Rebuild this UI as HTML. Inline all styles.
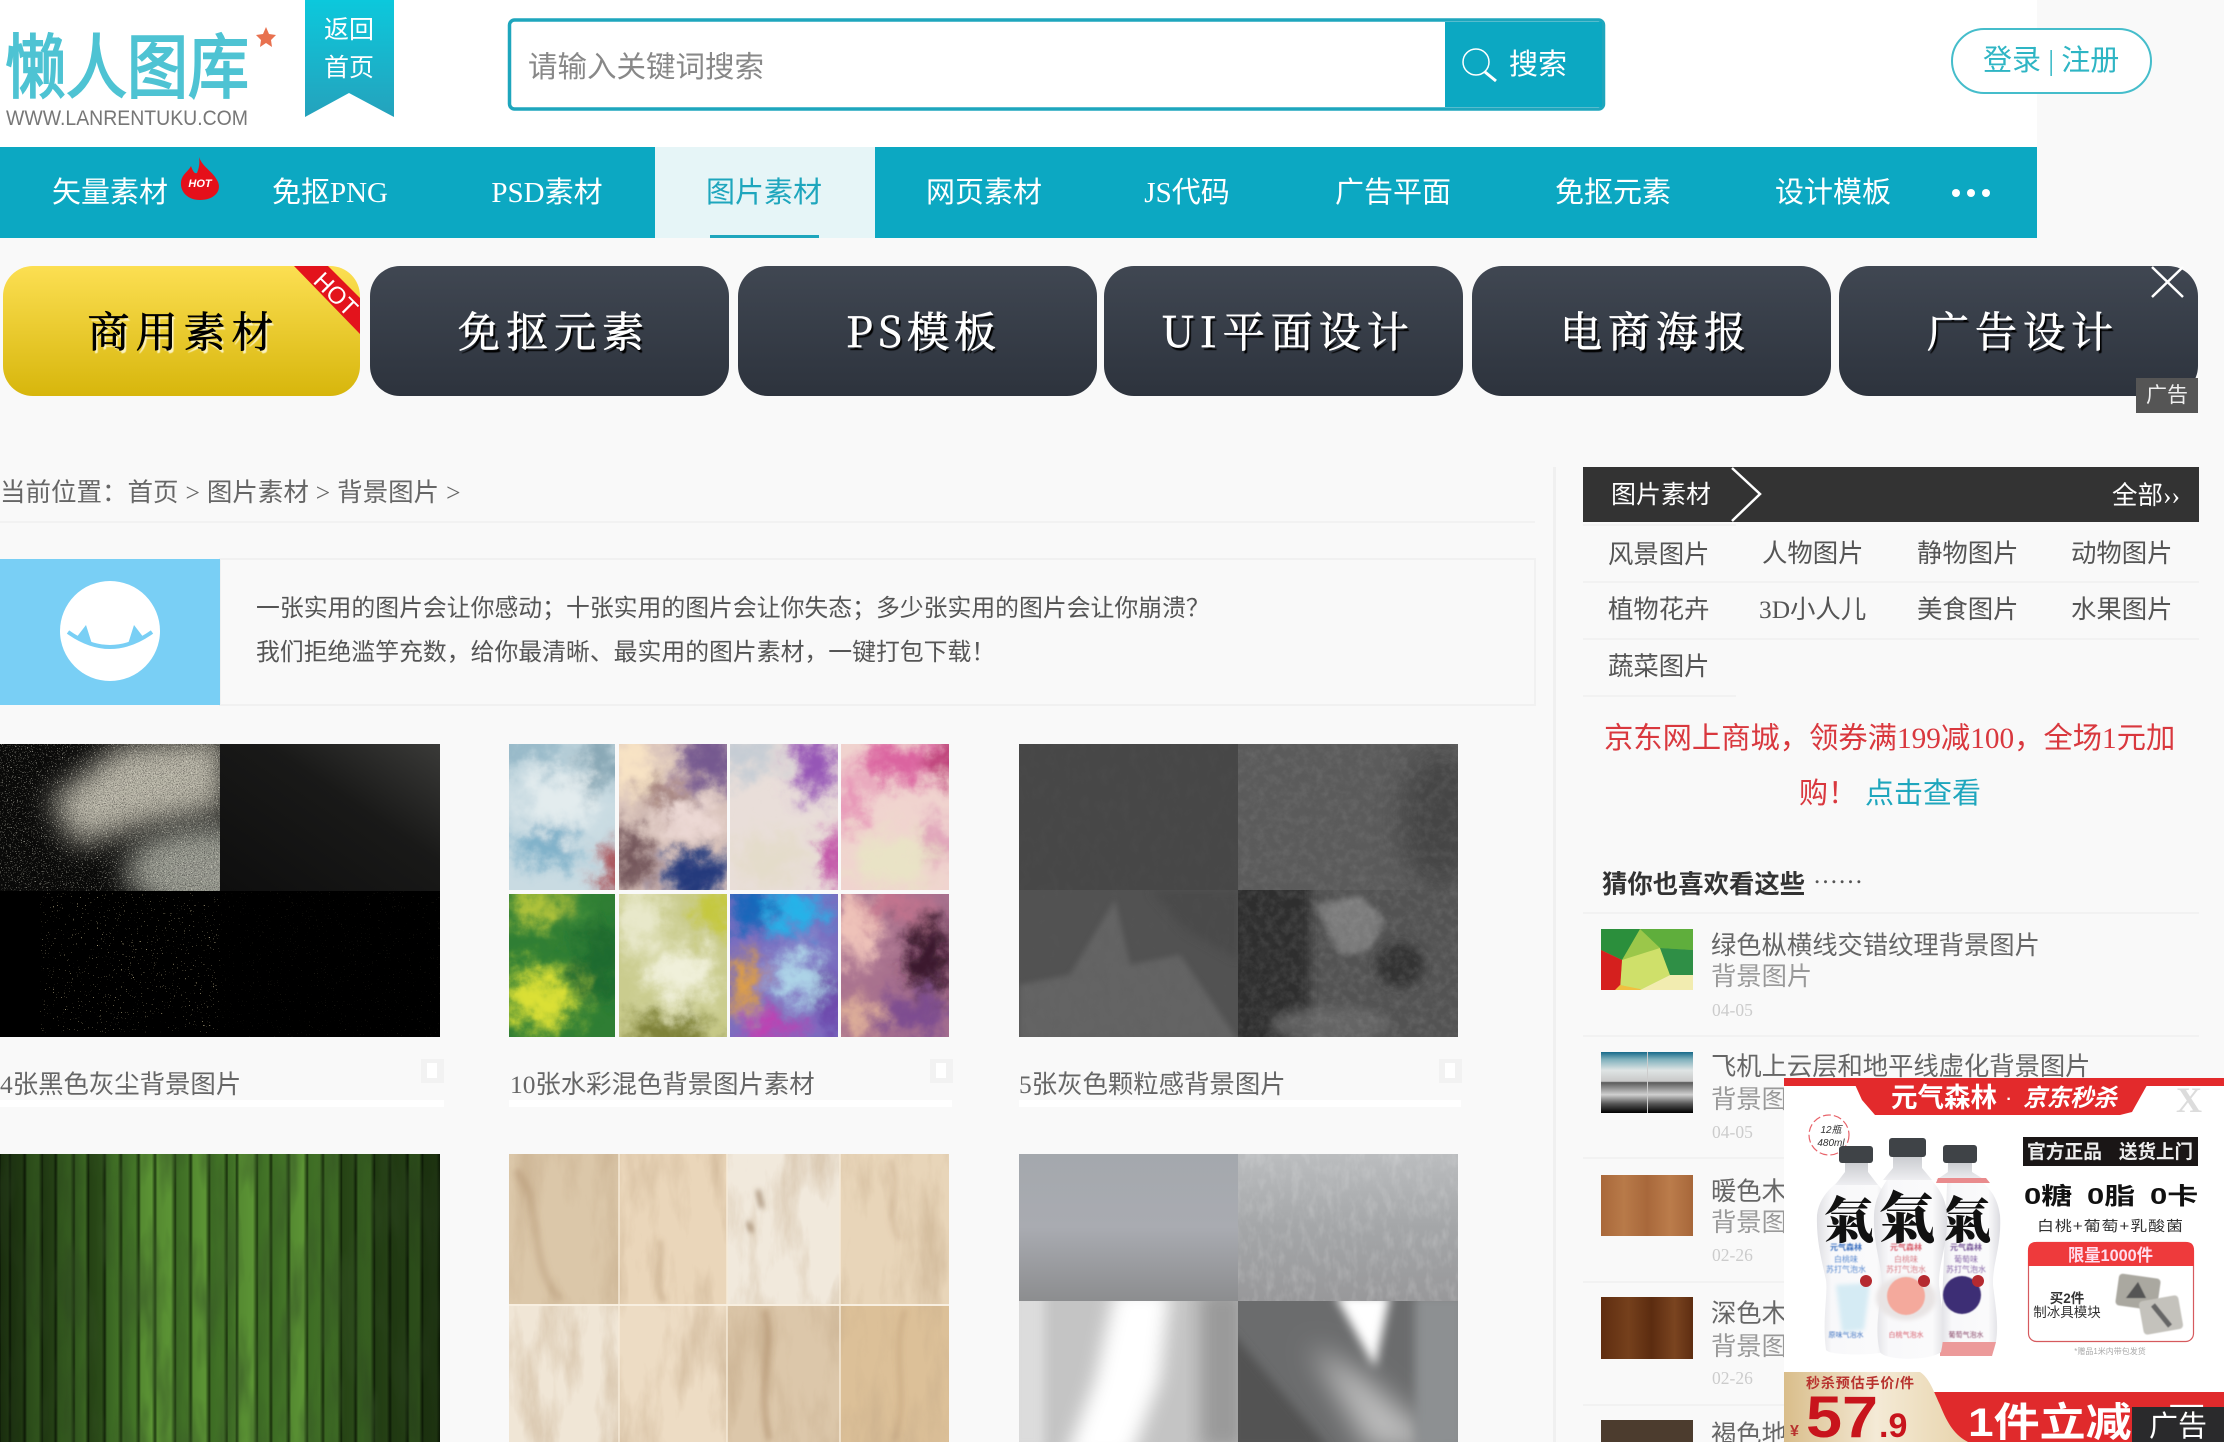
<!DOCTYPE html>
<html lang="zh-CN"><head><meta charset="utf-8"><title>图片素材</title>
<style>
html{margin:0;padding:0;width:2224px;height:1442px;overflow:hidden}
body{margin:0;padding:0;width:2224px;height:1442px;position:relative;overflow:hidden;background:#f9f9f9;font-family:"Liberation Serif","Noto Sans CJK SC",sans-serif;color:#666}
.a{position:absolute}
.t{position:absolute;white-space:nowrap}
#art{position:absolute;left:0;top:0}
.n{position:absolute;top:147px;width:220px;height:91px;line-height:92px;text-align:center;font-size:29px;color:#fff}
.b{position:absolute;top:266px;height:130px;border-radius:30px;background:linear-gradient(#404752,#2d333d);color:#fff;text-align:center;line-height:128px;font-family:"Noto Serif CJK SC","Liberation Serif",serif;font-size:42px;letter-spacing:6px;text-indent:9px;-webkit-text-stroke:.7px currentColor;text-shadow:2px 3px 1px #000}
.c{position:absolute;font-size:25.4px;line-height:30px;color:#555;white-space:nowrap}
.l{position:absolute;height:2px;background:#f2f2f2}
.h{font-size:25.3px;color:#666;line-height:30px}
.s{font-size:25.3px;color:#999;line-height:30px}
.d{font-size:17.5px;color:#ccc;line-height:20px}
.ti{font-size:25.4px;color:#666;line-height:30px}
.ub{position:absolute;top:1100px;height:7px;background:#fff}
.bk{position:absolute;top:1059px;width:23px;height:24px;background:#f2f2f2}
.bk i{position:absolute;left:6px;top:4px;width:10px;height:15px;background:#fff;display:block}
#pop{position:absolute;left:1784px;top:1078px;width:440px;height:364px;background:#fff;overflow:hidden;z-index:10}
#pop svg{position:absolute;left:0;top:0}
#pop text{font-family:"Liberation Sans","Noto Sans CJK SC",sans-serif}
</style></head><body>

<svg id="art" width="2224" height="1442" viewBox="0 0 2224 1442" xmlns="http://www.w3.org/2000/svg">
<defs>
<linearGradient id="rib" x1="0" y1="0" x2="0" y2="1"><stop offset="0" stop-color="#0cc8dc"/><stop offset="1" stop-color="#25a2bc"/></linearGradient>
<linearGradient id="g1tr" x1="1" y1="0" x2="0" y2="1"><stop offset="0" stop-color="#3a3a38"/><stop offset=".4" stop-color="#191918"/><stop offset="1" stop-color="#0e0e0e"/></linearGradient>
<linearGradient id="sd" x1="0" y1="0" x2="1" y2="0"><stop offset="0" stop-color="#000" stop-opacity=".4"/><stop offset=".3" stop-color="#000" stop-opacity="0"/><stop offset=".7" stop-color="#000" stop-opacity="0"/><stop offset="1" stop-color="#000" stop-opacity=".4"/></linearGradient>
<filter id="spk" x="0" y="0" width="100%" height="100%"><feTurbulence type="fractalNoise" baseFrequency=".8" numOctaves="2" seed="4"/><feColorMatrix values="0 0 0 0 .9 0 0 0 0 .88 0 0 0 0 .75 0 0 0 14 -9"/></filter>
<filter id="spkd" x="0" y="0" width="100%" height="100%"><feTurbulence type="fractalNoise" baseFrequency=".9" numOctaves="2" seed="14"/><feColorMatrix values="0 0 0 0 0 0 0 0 0 0 0 0 0 0 0 0 0 0 12 -6.4"/></filter>
<filter id="spk2" x="0" y="0" width="100%" height="100%"><feTurbulence type="fractalNoise" baseFrequency=".75" numOctaves="2" seed="9"/><feColorMatrix values="0 0 0 0 .8 0 0 0 0 .68 0 0 0 0 .38 0 0 0 20 -15"/></filter>
<filter id="gr" x="0" y="0" width="100%" height="100%"><feTurbulence type="fractalNoise" baseFrequency=".12" numOctaves="4" seed="7"/><feColorMatrix values="0 0 0 0 .62 0 0 0 0 .62 0 0 0 0 .62 1.8 0 0 0 -.7"/></filter>
<filter id="gr2" x="0" y="0" width="100%" height="100%"><feTurbulence type="fractalNoise" baseFrequency=".1 .06" numOctaves="4" seed="21"/><feColorMatrix values="0 0 0 0 .1 0 0 0 0 .1 0 0 0 0 .1 2 0 0 0 -.85"/></filter>
<filter id="wc" x="-30%" y="-30%" width="160%" height="160%"><feGaussianBlur stdDeviation="10" result="b"/><feTurbulence type="fractalNoise" baseFrequency=".05" numOctaves="5" seed="5" result="n"/><feDisplacementMap in="b" in2="n" scale="40" xChannelSelector="R" yChannelSelector="G"/></filter>
<filter id="mb" x="0" y="0" width="100%" height="100%"><feTurbulence type="fractalNoise" baseFrequency=".035 .01" numOctaves="5" seed="12"/><feColorMatrix values="0 0 0 0 .55 0 0 0 0 .4 0 0 0 0 .25 2.6 0 0 0 -1.15"/></filter>
<filter id="ms" x="0" y="0" width="100%" height="100%"><feTurbulence type="fractalNoise" baseFrequency=".12 .06" numOctaves="3" seed="3"/><feColorMatrix values="0 0 0 0 1 0 0 0 0 1 0 0 0 0 1 1.6 0 0 0 -.7"/></filter>
<filter id="bn" x="0" y="0" width="100%" height="100%"><feTurbulence type="fractalNoise" baseFrequency=".05 .012" numOctaves="3" seed="31"/><feColorMatrix values="0 0 0 0 .04 0 0 0 0 .1 0 0 0 0 .02 2.4 0 0 0 -.95"/></filter>
<filter id="bl" x="-40%" y="-40%" width="180%" height="180%"><feGaussianBlur stdDeviation="14"/></filter>
<filter id="bl2" x="-30%" y="-30%" width="160%" height="160%"><feGaussianBlur stdDeviation="5"/></filter>
<filter id="bl4" x="-30%" y="-30%" width="160%" height="160%"><feGaussianBlur stdDeviation="9"/></filter>
<filter id="bl3" x="-30%" y="-30%" width="160%" height="160%"><feGaussianBlur stdDeviation="3"/></filter>
<linearGradient id="b1"><stop offset="0" stop-color="#1d3810"/><stop offset=".12" stop-color="#558a31"/><stop offset=".8" stop-color="#5c9435"/><stop offset="1" stop-color="#203c11"/></linearGradient>
<linearGradient id="b2"><stop offset="0" stop-color="#172c0b"/><stop offset=".12" stop-color="#3d6c24"/><stop offset=".8" stop-color="#447528"/><stop offset="1" stop-color="#19300c"/></linearGradient>
<linearGradient id="b3"><stop offset="0" stop-color="#0f2007"/><stop offset=".12" stop-color="#2a4b17"/><stop offset=".8" stop-color="#30541b"/><stop offset="1" stop-color="#122409"/></linearGradient>
<linearGradient id="mt1" x1="0" y1="0" x2="0" y2="1"><stop offset="0" stop-color="#a4a8ad"/><stop offset=".5" stop-color="#a9abb1"/><stop offset="1" stop-color="#8c8d8f"/></linearGradient>
<linearGradient id="mt2" x1="0" y1="0" x2="0" y2="1"><stop offset="0" stop-color="#bbbdbf"/><stop offset=".5" stop-color="#a4a6a8"/><stop offset="1" stop-color="#98989a"/></linearGradient>
<linearGradient id="sky" x1="0" y1="0" x2="0" y2="1"><stop offset="0" stop-color="#176a8a"/><stop offset=".12" stop-color="#7fb0bc"/><stop offset=".3" stop-color="#dfe4e4"/><stop offset=".48" stop-color="#c8c8c8"/><stop offset=".5" stop-color="#5a5a5a"/><stop offset=".7" stop-color="#d0d0d0"/><stop offset=".85" stop-color="#555"/><stop offset="1" stop-color="#000"/></linearGradient>
<linearGradient id="wd1" x1="0" y1="0" x2="1" y2="0"><stop offset="0" stop-color="#a9683a"/><stop offset=".25" stop-color="#b87a49"/><stop offset=".5" stop-color="#a8683b"/><stop offset=".75" stop-color="#bb7c4b"/><stop offset="1" stop-color="#a7673a"/></linearGradient>
<linearGradient id="wd2" x1="0" y1="0" x2="1" y2="0"><stop offset="0" stop-color="#5f2d10"/><stop offset=".3" stop-color="#75401c"/><stop offset=".55" stop-color="#5c2c10"/><stop offset=".8" stop-color="#7a4420"/><stop offset="1" stop-color="#5e2d11"/></linearGradient>
<clipPath id="cp1"><rect x="509" y="744" width="106" height="146"/></clipPath>
<clipPath id="cp2"><rect x="619" y="744" width="108" height="146"/></clipPath>
<clipPath id="cp3"><rect x="730" y="744" width="108" height="146"/></clipPath>
<clipPath id="cp4"><rect x="841" y="744" width="108" height="146"/></clipPath>
<clipPath id="cp5"><rect x="509" y="894" width="106" height="143"/></clipPath>
<clipPath id="cp6"><rect x="619" y="894" width="108" height="143"/></clipPath>
<clipPath id="cp7"><rect x="730" y="894" width="108" height="143"/></clipPath>
<clipPath id="cp8"><rect x="841" y="894" width="108" height="143"/></clipPath>
<clipPath id="ct1"><rect x="1601" y="929" width="92" height="61"/></clipPath>
<clipPath id="ct5"><rect x="1019" y="1301" width="219" height="141"/></clipPath>
<clipPath id="ct6"><rect x="1238" y="1301" width="220" height="141"/></clipPath>
<clipPath id="cq0"><rect x="0" y="744" width="220" height="147"/></clipPath>
<clipPath id="cq1"><rect x="1019" y="890" width="219" height="147"/></clipPath>
<clipPath id="cq2"><rect x="1238" y="890" width="220" height="147"/></clipPath>
<clipPath id="cq3"><rect x="1238" y="744" width="220" height="146"/></clipPath>
<clipPath id="cmar"><rect x="509" y="1154" width="440" height="288"/></clipPath>
</defs>

<!-- header -->
<rect x="0" y="0" width="2037" height="147" fill="#fff"/>
<text x="5" y="92" font-size="70" textLength="244" lengthAdjust="spacingAndGlyphs" fill="#4ec3d3" stroke="#4ec3d3" stroke-width="2" font-family="Noto Sans CJK SC,sans-serif">懒人图库</text>
<polygon points="266,27 269,34 276,35 271,40 272,47 266,43 260,47 261,40 256,35 263,34" fill="#e8714f"/>
<text x="6" y="125" font-size="21" textLength="242" lengthAdjust="spacingAndGlyphs" fill="#777" font-family="Liberation Sans,sans-serif">WWW.LANRENTUKU.COM</text>
<polygon points="305,0 394,0 394,117 349,93 305,117" fill="url(#rib)"/>

<!-- nav -->
<rect x="0" y="147" width="2037" height="91" fill="#0ca8c2"/>
<rect x="655" y="147" width="220" height="91" fill="#e6f5f7"/>
<rect x="710" y="235" width="109" height="3" fill="#1ea6bd"/>
<path d="M199 157 C203 168 213 171 218 182 C222 192 213 200 200 200 C188 200 180 192 181 182 C182 174 188 172 191 166 C193 172 195 174 197 173 C199 168 200 163 199 157Z" fill="#e5101a"/>
<text x="200" y="187" font-size="11" font-weight="bold" font-style="italic" fill="#fff" text-anchor="middle" font-family="Liberation Sans,sans-serif">HOT</text>
<circle cx="1956" cy="193" r="4" fill="#fff"/><circle cx="1971" cy="193" r="4" fill="#fff"/><circle cx="1986" cy="193" r="4" fill="#fff"/>

<!-- search -->
<rect x="509.5" y="20" width="1094" height="89" rx="5" fill="#fff" stroke="#1ea6bd" stroke-width="3.5"/>
<path d="M1445 22H1602V107H1445Z" fill="#0ca8c2"/>
<circle cx="1476" cy="62" r="13" fill="none" stroke="#fff" stroke-width="1.5"/>
<path d="M1485 72L1496 81" stroke="#fff" stroke-width="3"/>

<!-- login -->
<rect x="1952" y="29" width="199" height="64" rx="32" fill="#fff" stroke="#45bdcb" stroke-width="2"/>

<!-- intro -->
<rect x="220" y="559" width="1315" height="146" fill="none" stroke="#f1f1f1" stroke-width="2"/>
<rect x="0" y="559" width="220" height="146" fill="#79cff5"/>
<circle cx="110" cy="631" r="50" fill="#fff"/>
<path d="M68 632 Q110 662 152 632" fill="none" stroke="#79cff5" stroke-width="4"/>
<path d="M76 638L86 625L92 644ZM128 644L134 625L144 638Z" fill="#79cff5"/>

<!-- thumb 1 -->
<rect x="0" y="744" width="220" height="147" fill="#0b0b0a"/>
<g clip-path="url(#cq0)">
<path d="M225 735L225 810L150 825L75 845L50 800L120 745Z" fill="#b9b6a8" filter="url(#bl)"/>
<ellipse cx="210" cy="870" rx="85" ry="45" fill="#9a9b92" filter="url(#bl)"/>
<rect x="0" y="744" width="220" height="147" filter="url(#spkd)" opacity=".3"/>
<rect x="0" y="744" width="220" height="147" filter="url(#spk)" opacity=".55"/>
</g>
<rect x="220" y="744" width="220" height="147" fill="url(#g1tr)"/>
<rect x="0" y="891" width="440" height="146" fill="#000"/>
<rect x="40" y="893" width="180" height="140" filter="url(#spk2)"/>
<rect x="220" y="891" width="220" height="146" filter="url(#spk2)" opacity=".2"/>

<!-- thumb 2 watercolor -->
<rect x="509" y="744" width="440" height="293" fill="#fff"/>
<g clip-path="url(#cp1)"><rect x="509" y="744" width="106" height="146" fill="#c9dbe2"/><g filter="url(#wc)"><ellipse cx="560" cy="800" rx="34" ry="30" fill="#e3ecee"/><ellipse cx="545" cy="848" rx="35" ry="14" fill="#6fa8c4"/><ellipse cx="620" cy="880" rx="20" ry="30" fill="#a8494f"/><ellipse cx="520" cy="750" rx="50" ry="14" fill="#8fb4c4"/><ellipse cx="600" cy="760" rx="20" ry="30" fill="#86a6b4"/></g></g>
<g clip-path="url(#cp2)"><rect x="619" y="744" width="108" height="146" fill="#d9c3bb"/><g filter="url(#wc)"><ellipse cx="630" cy="765" rx="26" ry="30" fill="#f8e3c4"/><ellipse cx="710" cy="760" rx="28" ry="32" fill="#75588f"/><ellipse cx="668" cy="795" rx="24" ry="10" fill="#7e4c48"/><ellipse cx="690" cy="818" rx="30" ry="18" fill="#efdcd8"/><ellipse cx="695" cy="875" rx="34" ry="24" fill="#24397c"/><ellipse cx="630" cy="860" rx="18" ry="36" fill="#6d4f55"/></g></g>
<g clip-path="url(#cp3)"><rect x="730" y="744" width="108" height="146" fill="#e9ded9"/><g filter="url(#wc)"><ellipse cx="745" cy="755" rx="30" ry="22" fill="#c5ccd4"/><ellipse cx="815" cy="765" rx="24" ry="30" fill="#9452b6"/><ellipse cx="840" cy="860" rx="12" ry="34" fill="#b9309c"/><ellipse cx="770" cy="860" rx="35" ry="26" fill="#e4dcca"/></g></g>
<g clip-path="url(#cp4)"><rect x="841" y="744" width="108" height="146" fill="#f0d4cf"/><g filter="url(#wc)"><ellipse cx="900" cy="760" rx="40" ry="20" fill="#da5f9e"/><ellipse cx="945" cy="755" rx="14" ry="24" fill="#b62e6c"/><ellipse cx="850" cy="800" rx="14" ry="30" fill="#e68cb4"/><ellipse cx="895" cy="860" rx="42" ry="26" fill="#e9e3c6"/><ellipse cx="940" cy="840" rx="12" ry="22" fill="#dc93b4"/></g></g>
<g clip-path="url(#cp5)"><rect x="509" y="894" width="106" height="143" fill="#2f7e34"/><g filter="url(#wc)"><ellipse cx="535" cy="905" rx="30" ry="18" fill="#b9c83a"/><ellipse cx="540" cy="1000" rx="36" ry="30" fill="#dbe036"/><ellipse cx="600" cy="960" rx="22" ry="40" fill="#1f6a2f"/><ellipse cx="575" cy="910" rx="14" ry="14" fill="#3f8f3a"/></g></g>
<g clip-path="url(#cp6)"><rect x="619" y="894" width="108" height="143" fill="#cacc8e"/><g filter="url(#wc)"><ellipse cx="640" cy="920" rx="26" ry="30" fill="#e8e8ca"/><ellipse cx="715" cy="910" rx="16" ry="26" fill="#c4c832"/><ellipse cx="680" cy="975" rx="34" ry="28" fill="#f0f0da"/><ellipse cx="670" cy="1035" rx="46" ry="16" fill="#75782f"/></g></g>
<g clip-path="url(#cp7)"><rect x="730" y="894" width="108" height="143" fill="#7a6dc0"/><g filter="url(#wc)"><ellipse cx="750" cy="905" rx="24" ry="28" fill="#1466ba"/><ellipse cx="795" cy="910" rx="28" ry="22" fill="#22b5ea"/><ellipse cx="800" cy="975" rx="26" ry="26" fill="#aed6e8"/><ellipse cx="745" cy="985" rx="14" ry="28" fill="#f2a92e"/><ellipse cx="770" cy="1030" rx="32" ry="14" fill="#c93ab0"/><ellipse cx="832" cy="1000" rx="14" ry="34" fill="#6a3fa8"/></g></g>
<g clip-path="url(#cp8)"><rect x="841" y="894" width="108" height="143" fill="#a8718e"/><g filter="url(#wc)"><ellipse cx="855" cy="930" rx="22" ry="36" fill="#f0c4ba"/><ellipse cx="895" cy="905" rx="30" ry="14" fill="#c8748e"/><ellipse cx="930" cy="955" rx="22" ry="40" fill="#37192a"/><ellipse cx="915" cy="1015" rx="34" ry="20" fill="#7c4b90"/><ellipse cx="855" cy="1020" rx="18" ry="22" fill="#e2b49a"/></g></g>
<rect x="615" y="744" width="4" height="293" fill="#f9f9f9"/><rect x="727" y="744" width="3" height="293" fill="#f9f9f9"/><rect x="838" y="744" width="3" height="293" fill="#f9f9f9"/><rect x="509" y="890" width="440" height="4" fill="#f9f9f9"/>

<!-- thumb 3 grey -->
<rect x="1019" y="744" width="219" height="146" fill="#474747"/>
<rect x="1238" y="744" width="220" height="146" fill="#5b5b5b"/>
<rect x="1019" y="890" width="219" height="147" fill="#525252"/>
<rect x="1238" y="890" width="220" height="147" fill="#535353"/>
<g clip-path="url(#cq3)"><ellipse cx="1440" cy="820" rx="40" ry="70" fill="#454545" filter="url(#bl)"/></g>
<g clip-path="url(#cq1)">
<path d="M1019 1040V985L1070 975L1115 900L1130 965L1180 955L1238 1040Z" fill="#6c6c6c" opacity=".7" filter="url(#bl3)"/>
<path d="M1150 890H1238V960L1185 930Z" fill="#474747" opacity=".7" filter="url(#bl2)"/>
</g>
<g clip-path="url(#cq2)">
<rect x="1225" y="880" width="85" height="170" fill="#2e2e2e" filter="url(#bl2)"/>
<path d="M1315 905L1360 895L1385 920L1370 950L1340 955L1330 935Z" fill="#7c7c7c" filter="url(#bl3)"/>
<ellipse cx="1330" cy="1025" rx="60" ry="18" fill="#6a6a6a" filter="url(#bl2)" opacity=".8"/>
<ellipse cx="1400" cy="965" rx="24" ry="22" fill="#333" filter="url(#bl2)"/>
<rect x="1238" y="890" width="220" height="147" filter="url(#gr)" opacity=".15"/>
</g>
<rect x="1238" y="744" width="220" height="146" filter="url(#gr)" opacity=".12"/>
<rect x="1019" y="744" width="439" height="293" filter="url(#gr2)" opacity=".2"/>

<!-- bamboo -->
<rect x="0" y="1154" width="440" height="288" fill="#1f3a10"/>
<g>
<rect x="0" y="1154" width="10" height="288" fill="url(#b3)"/><rect x="10" y="1154" width="15" height="288" fill="url(#b3)"/><rect x="25" y="1154" width="17" height="288" fill="url(#b2)"/><rect x="42" y="1154" width="14" height="288" fill="url(#b3)"/><rect x="56" y="1154" width="18" height="288" fill="url(#b2)"/><rect x="74" y="1154" width="14" height="288" fill="url(#b2)"/><rect x="88" y="1154" width="17" height="288" fill="url(#b3)"/><rect x="105" y="1154" width="16" height="288" fill="url(#b2)"/><rect x="121" y="1154" width="18" height="288" fill="url(#b2)"/><rect x="139" y="1154" width="16" height="288" fill="url(#b1)"/><rect x="155" y="1154" width="20" height="288" fill="url(#b1)"/><rect x="175" y="1154" width="16" height="288" fill="url(#b2)"/><rect x="191" y="1154" width="18" height="288" fill="url(#b1)"/><rect x="209" y="1154" width="18" height="288" fill="url(#b2)"/><rect x="227" y="1154" width="10" height="288" fill="url(#b2)"/><rect x="237" y="1154" width="20" height="288" fill="url(#b1)"/><rect x="257" y="1154" width="14" height="288" fill="url(#b2)"/><rect x="271" y="1154" width="18" height="288" fill="url(#b2)"/><rect x="289" y="1154" width="18" height="288" fill="url(#b1)"/><rect x="307" y="1154" width="16" height="288" fill="url(#b2)"/><rect x="323" y="1154" width="18" height="288" fill="url(#b2)"/><rect x="341" y="1154" width="15" height="288" fill="url(#b3)"/><rect x="356" y="1154" width="18" height="288" fill="url(#b2)"/><rect x="374" y="1154" width="16" height="288" fill="url(#b3)"/><rect x="390" y="1154" width="18" height="288" fill="url(#b3)"/><rect x="408" y="1154" width="14" height="288" fill="url(#b2)"/><rect x="422" y="1154" width="18" height="288" fill="url(#b3)"/>
</g>
<rect x="0" y="1154" width="440" height="288" filter="url(#bn)" opacity=".6"/>
<rect x="0" y="1154" width="440" height="288" fill="url(#sd)"/>

<!-- marble -->
<rect x="509" y="1154" width="110" height="151" fill="#dbc7a9"/><rect x="619" y="1154" width="108" height="151" fill="#ead6ba"/><rect x="727" y="1154" width="113" height="151" fill="#f1e9dc"/><rect x="840" y="1154" width="109" height="151" fill="#e8d5b9"/>
<rect x="509" y="1305" width="110" height="137" fill="#f0e6d6"/><rect x="619" y="1305" width="108" height="137" fill="#eddcc4"/><rect x="727" y="1305" width="113" height="137" fill="#dcc7aa"/><rect x="840" y="1305" width="109" height="137" fill="#dcc098"/>
<rect x="509" y="1154" width="440" height="288" filter="url(#mb)" opacity=".5"/>
<g clip-path="url(#cmar)">
<g filter="url(#bl3)" fill="none" stroke="#94704a">
<path d="M758 1190L762 1208M748 1222L752 1232" stroke-width="3" stroke="#7a5a3a"/>
<path d="M660 1240C665 1265 650 1285 665 1302" stroke-width="3" opacity=".45"/>
<path d="M765 1310C775 1350 755 1390 770 1440" stroke-width="6" opacity=".35"/>
<path d="M515 1170C545 1200 525 1260 560 1300" stroke-width="8" opacity=".22"/>
<path d="M890 1160C905 1190 880 1210 900 1240" stroke-width="5" opacity=".2"/>
<path d="M905 1310C890 1350 910 1400 895 1440" stroke-width="4" opacity=".25"/>
</g></g>
<path d="M619 1154V1442M727 1154V1442M840 1154V1442" stroke="#f5ead8" stroke-width="1.5"/><path d="M509 1305H949" stroke="#f8efe0" stroke-width="2"/>

<!-- metal -->
<rect x="1019" y="1154" width="219" height="147" fill="url(#mt1)"/><rect x="1238" y="1154" width="220" height="147" fill="url(#mt2)"/>
<rect x="1238" y="1154" width="220" height="147" filter="url(#ms)" opacity=".22"/>
<g clip-path="url(#ct5)"><rect x="1019" y="1301" width="219" height="141" fill="#c4c4c4"/><path d="M1115 1290L1170 1290L1160 1380L1130 1460H1065L1095 1380Z" fill="#fff" filter="url(#bl4)"/><rect x="1200" y="1290" width="45" height="160" fill="#9a9a9a" filter="url(#bl4)"/><rect x="1010" y="1290" width="35" height="160" fill="#dcdcdc" filter="url(#bl2)"/></g>
<g clip-path="url(#ct6)"><rect x="1238" y="1301" width="220" height="141" fill="#6b6c6d"/><path d="M1230 1330L1330 1450H1230Z" fill="#525253" filter="url(#bl2)"/><path d="M1335 1295H1390L1375 1368Z" fill="#fff" filter="url(#bl2)"/><path d="M1310 1345L1360 1375L1450 1450H1370Z" fill="#bdbdbd" filter="url(#bl)"/><rect x="1415" y="1295" width="50" height="155" fill="#8d9092" filter="url(#bl2)"/></g>

<rect x="1553" y="467" width="3" height="975" fill="#f0f0f0"/>
<rect x="1583" y="467" width="616" height="55" fill="#333"/>
<path d="M1732 468L1760 494L1732 521" fill="none" stroke="#fff" stroke-width="2.5" stroke-linejoin="miter"/>

<!-- list thumbs -->
<g clip-path="url(#ct1)"><rect x="1601" y="929" width="92" height="61" fill="#9bc74a"/><polygon points="1601,929 1640,929 1622,960 1601,950" fill="#2b8f3c"/><polygon points="1640,929 1693,929 1693,950 1660,948" fill="#5fae3c"/><polygon points="1622,960 1660,948 1670,975 1640,990 1620,985" fill="#cfe06a"/><polygon points="1601,950 1622,960 1620,990 1601,990" fill="#d5201e"/><polygon points="1620,985 1645,990 1615,990" fill="#f0c040"/><polygon points="1660,948 1693,950 1693,975 1670,975" fill="#2f8f46"/><polygon points="1670,975 1693,975 1693,990 1640,990" fill="#f2ecb0"/></g>
<rect x="1601" y="1052" width="92" height="61" fill="url(#sky)"/><rect x="1647" y="1052" width="1" height="61" fill="#ccc"/>
<rect x="1601" y="1175" width="92" height="61" fill="url(#wd1)"/>
<rect x="1601" y="1297" width="92" height="62" fill="url(#wd2)"/>
<rect x="1601" y="1420" width="92" height="22" fill="#4c3c2e"/>
</svg>

<!-- header text -->
<div class="t" style="left:324px;top:16px;font-size:25px;line-height:30px;color:#fff">返回</div>
<div class="t" style="left:324px;top:54px;font-size:25px;line-height:30px;color:#fff">首页</div>
<div class="t" style="left:528px;top:50px;font-size:29.5px;line-height:36px;color:#888">请输入关键词搜索</div>
<div class="t" style="left:1509px;top:47px;font-size:29px;line-height:36px;color:#fff">搜索</div>
<div class="t" style="left:1983px;top:44px;font-size:29px;line-height:34px;color:#2eb5c4">登录 | 注册</div>

<div class="n" style="left:0">矢量素材</div>
<div class="n" style="left:220px">免抠PNG</div>
<div class="n" style="left:437px">PSD素材</div>
<div class="n" style="left:654px;color:#1ea6bd">图片素材</div>
<div class="n" style="left:874px">网页素材</div>
<div class="n" style="left:1077px">JS代码</div>
<div class="n" style="left:1283px">广告平面</div>
<div class="n" style="left:1503px">免抠元素</div>
<div class="n" style="left:1723px">设计模板</div>

<!-- buttons -->
<div class="b" style="left:3px;width:357px;background:linear-gradient(#fcdf52,#d7b60c);color:#000;text-indent:4px;text-shadow:2px 3px 1px #fbf3c2;overflow:hidden">商用素材
<svg class="a" style="left:0;top:0" width="357" height="130"><polygon points="291,0 325,0 357,32 357,68" fill="#e3131c"/><text x="327" y="34" transform="rotate(45 327 34)" font-size="24" fill="#fff" text-anchor="middle" font-family="Liberation Sans,sans-serif" style="text-shadow:none;letter-spacing:0;-webkit-text-stroke:0">HOT</text></svg></div>
<div class="b" style="left:370px;width:359px">免抠元素</div>
<div class="b" style="left:738px;width:359px;letter-spacing:5px;text-indent:12px">PS模板</div>
<div class="b" style="left:1104px;width:359px">UI平面设计</div>
<div class="b" style="left:1472px;width:359px">电商海报</div>
<div class="b" style="left:1839px;width:359px">广告设计</div>
<svg class="a" style="left:2150px;top:264px" width="36" height="36"><path d="M2 3L33 33M33 3L2 33" stroke="#fff" stroke-width="2.5"/></svg>
<div class="a" style="left:2136px;top:378px;width:62px;height:35px;background:#555;color:#eee;font-size:21px;line-height:35px;text-align:center">广告</div>

<!-- breadcrumb -->
<div class="t" style="left:0;top:478px;font-size:25.5px;line-height:30px;color:#666;word-spacing:.6px">当前位置：首页 &gt; 图片素材 &gt; 背景图片 &gt;</div>
<div class="l" style="left:0;top:521px;width:1535px"></div>

<div class="t" style="left:256px;top:594px;font-size:23.85px;line-height:30px;color:#555">一张实用的图片会让你感动；十张实用的图片会让你失态；多少张实用的图片会让你崩溃？</div>
<div class="t" style="left:256px;top:638px;font-size:23.85px;line-height:30px;color:#555">我们拒绝滥竽充数，给你最清晰、最实用的图片素材，一键打包下载！</div>

<!-- thumb titles -->
<div class="t ti" style="left:0;top:1070px">4张黑色灰尘背景图片</div>
<div class="t ti" style="left:510px;top:1070px">10张水彩混色背景图片素材</div>
<div class="t ti" style="left:1019px;top:1070px">5张灰色颗粒感背景图片</div>
<div class="ub" style="left:0;width:444px"></div><div class="ub" style="left:509px;width:443px"></div><div class="ub" style="left:1019px;width:442px"></div>
<div class="bk" style="left:421px"><i></i></div><div class="bk" style="left:930px"><i></i></div><div class="bk" style="left:1439px"><i></i></div>

<!-- sidebar -->
<div class="t" style="left:1611px;top:481px;font-size:25px;line-height:30px;color:#fff">图片素材</div>
<div class="t" style="left:2112px;top:481px;font-size:25.5px;line-height:30px;color:#fff">全部››</div>
<div class="c" style="left:1608px;top:540px">风景图片</div><div class="c" style="left:1762px;top:539px">人物图片</div><div class="c" style="left:1917px;top:539px">静物图片</div><div class="c" style="left:2071px;top:539px">动物图片</div>
<div class="c" style="left:1608px;top:595px">植物花卉</div><div class="c" style="left:1759px;top:595px">3D小人儿</div><div class="c" style="left:1917px;top:595px">美食图片</div><div class="c" style="left:2071px;top:595px">水果图片</div>
<div class="c" style="left:1608px;top:652px">蔬菜图片</div>
<div class="l" style="left:1583px;top:524px;width:153px"></div>
<div class="l" style="left:1583px;top:581px;width:616px"></div>
<div class="l" style="left:1583px;top:638px;width:616px"></div>
<div class="l" style="left:1583px;top:695px;width:153px"></div>
<div class="t" style="left:1604px;top:721px;font-size:29.3px;line-height:36px;color:#d9383e">京东网上商城，领券满199减100，全场1元加</div>
<div class="t" style="left:1799px;top:776px;font-size:29px;line-height:36px;color:#d9383e">购！</div>
<div class="t" style="left:1865px;top:776px;font-size:29px;line-height:36px;color:#1ea6bd">点击查看</div>
<div class="t" style="left:1602px;top:870px;font-size:25.4px;line-height:30px;color:#333;font-weight:bold">猜你也喜欢看这些</div>
<div class="t" style="left:1813px;top:861px;font-size:25px;line-height:30px;color:#555">……</div>
<div class="l" style="left:1583px;top:912px;width:616px"></div>

<div class="t h" style="left:1711px;top:931px">绿色枞横线交错纹理背景图片</div>
<div class="t s" style="left:1711px;top:962px">背景图片</div>
<div class="t d" style="left:1712px;top:1000px">04-05</div>
<div class="l" style="left:1583px;top:1035px;width:616px"></div>
<div class="t h" style="left:1711px;top:1052px">飞机上云层和地平线虚化背景图片</div>
<div class="t s" style="left:1711px;top:1085px">背景图片</div>
<div class="t d" style="left:1712px;top:1122px">04-05</div>
<div class="l" style="left:1583px;top:1157px;width:616px"></div>
<div class="t h" style="left:1711px;top:1177px">暖色木纹背景图片</div>
<div class="t s" style="left:1711px;top:1208px">背景图片</div>
<div class="t d" style="left:1712px;top:1245px">02-26</div>
<div class="l" style="left:1583px;top:1281px;width:616px"></div>
<div class="t h" style="left:1711px;top:1299px">深色木纹背景图片</div>
<div class="t s" style="left:1711px;top:1332px">背景图片</div>
<div class="t d" style="left:1712px;top:1368px">02-26</div>
<div class="l" style="left:1583px;top:1404px;width:616px"></div>
<div class="t h" style="left:1711px;top:1420px">褐色地板木纹背景图片</div>

<!-- popup ad -->
<div id="pop">
<svg width="440" height="364" viewBox="1784 1078 440 364" xmlns="http://www.w3.org/2000/svg">
<defs>
<linearGradient id="gold" x1="0" y1="0" x2="1" y2="0"><stop offset="0" stop-color="#d9bd8a"/><stop offset=".5" stop-color="#f4ead6"/><stop offset="1" stop-color="#e8d4ac"/></linearGradient>
<linearGradient id="btl" x1="0" y1="0" x2="1" y2="0"><stop offset="0" stop-color="#dfdfe3"/><stop offset=".2" stop-color="#f8f8fa"/><stop offset=".8" stop-color="#fafafb"/><stop offset="1" stop-color="#dcdce1"/></linearGradient>
<linearGradient id="nk" x1="0" y1="0" x2="0" y2="1"><stop offset="0" stop-color="#c9cbcf"/><stop offset="1" stop-color="#eeeef1"/></linearGradient>
<filter id="pb" x="-20%" y="-20%" width="140%" height="140%"><feGaussianBlur stdDeviation=".6"/></filter>
<filter id="pb2" x="-20%" y="-20%" width="140%" height="140%"><feGaussianBlur stdDeviation="2"/></filter>
</defs>
<rect x="1784" y="1078" width="440" height="8" fill="#e32a2c"/>
<path d="M1852 1078H2151L2132 1112L2120 1115H1875L1862 1100Z" fill="#e32a2c"/>
<text x="1891" y="1107" font-size="27" font-weight="bold" fill="#fff" textLength="106" lengthAdjust="spacingAndGlyphs">元气森林</text>
<text x="2009" y="1104" font-size="16" font-weight="bold" fill="#fff" text-anchor="middle">·</text>
<text x="2023" y="1106" font-size="24" font-weight="bold" font-style="italic" fill="#fff" textLength="94" lengthAdjust="spacingAndGlyphs">京东秒杀</text>
<text x="2176" y="1112" font-size="36" font-weight="bold" fill="#dcdcdc" style="font-family:'Liberation Serif',serif">X</text>

<circle cx="1829" cy="1135" r="20" fill="none" stroke="#e8636a" stroke-width="1.2" stroke-dasharray="8 3"/>
<text x="1831" y="1133" font-size="10" fill="#333" text-anchor="middle" font-style="italic">12瓶</text>
<text x="1831" y="1146" font-size="10" fill="#333" text-anchor="middle" font-style="italic">480ml</text>

<!-- right bottle -->
<path d="M1948 1162H1972V1172C1974 1180 1996 1184 2000 1215C2002 1245 1992 1265 1993 1285C1996 1310 2000 1330 1994 1350C1990 1356 1950 1356 1940 1350Z" fill="url(#btl)"/>
<path d="M1948 1162H1972V1172L1985 1180H1936L1948 1172Z" fill="url(#nk)"/>
<path d="M1938 1178H1986L1990 1183H1936Z" fill="#e98b8d"/>
<path d="M1940 1342H1996L1992 1356H1940Z" fill="#ec9a9a"/>
<rect x="1943" y="1145" width="34" height="18" rx="3" fill="#3f4347"/>
<text x="1966" y="1238" font-size="50" font-weight="900" fill="#111" text-anchor="middle" style="font-family:'Noto Serif CJK SC',serif">氣</text>
<!-- left bottle -->
<path d="M1845 1162H1868V1172C1872 1182 1888 1188 1892 1215L1890 1350C1880 1356 1830 1356 1826 1350C1822 1320 1828 1295 1826 1280C1822 1262 1816 1240 1817 1215C1820 1190 1842 1182 1845 1172Z" fill="url(#btl)"/>
<path d="M1845 1162H1868V1172L1878 1185H1835L1845 1172Z" fill="url(#nk)"/>
<rect x="1839" y="1146" width="34" height="17" rx="3" fill="#3f4347"/>
<text x="1849" y="1238" font-size="50" font-weight="900" fill="#111" text-anchor="middle" style="font-family:'Noto Serif CJK SC',serif">氣</text>
<!-- mid bottle -->
<path d="M1893 1156H1922V1168C1926 1178 1946 1188 1947 1215C1948 1245 1938 1265 1939 1285C1942 1310 1946 1330 1941 1352C1930 1361 1885 1361 1880 1352C1874 1330 1880 1305 1882 1285C1882 1265 1873 1245 1874 1215C1875 1190 1890 1180 1893 1168Z" fill="url(#btl)"/>
<path d="M1893 1156H1922V1168L1932 1180H1883L1893 1168Z" fill="url(#nk)"/>
<rect x="1889" y="1138" width="37" height="19" rx="3" fill="#3f4347"/>
<text x="1907" y="1238" font-size="56" font-weight="900" fill="#111" text-anchor="middle" style="font-family:'Noto Serif CJK SC',serif">氣</text>

<g font-size="8" text-anchor="middle" filter="url(#pb)">
<text x="1846" y="1250" fill="#3a6fc0" font-weight="bold">元气森林</text><text x="1846" y="1262" fill="#5a8ad0">白桃味</text><text x="1846" y="1272" fill="#5a8ad0">苏打气泡水</text>
<text x="1906" y="1250" fill="#d8606e" font-weight="bold">元气森林</text><text x="1906" y="1262" fill="#d8808a">白桃味</text><text x="1906" y="1272" fill="#d8808a">苏打气泡水</text>
<text x="1966" y="1250" fill="#7a5a9a" font-weight="bold">元气森林</text><text x="1966" y="1262" fill="#8a6aa8">葡萄味</text><text x="1966" y="1272" fill="#8a6aa8">苏打气泡水</text>
<text x="1846" y="1337" fill="#3a6fc0" font-size="7">原味气泡水</text><text x="1906" y="1337" fill="#d8606e" font-size="7">白桃气泡水</text><text x="1966" y="1337" fill="#8a4a6a" font-size="7">葡萄气泡水</text>
</g>
<path d="M1836 1285L1870 1283L1864 1330L1842 1332Z" fill="#d5ebf4" filter="url(#pb2)"/>
<ellipse cx="1906" cy="1298" rx="30" ry="22" fill="#e8e4e4" filter="url(#pb2)"/>
<circle cx="1906" cy="1296" r="19" fill="#f4a99c" filter="url(#pb)"/>
<circle cx="1962" cy="1295" r="19" fill="#3e2e74" filter="url(#pb)"/>
<circle cx="1866" cy="1281" r="6" fill="#b52a30"/><circle cx="1924" cy="1281" r="6" fill="#b52a30"/><circle cx="1978" cy="1281" r="6" fill="#b52a30"/>

<!-- right panel -->
<rect x="2023" y="1137" width="175" height="29" fill="#1a1616"/>
<text x="2027" y="1158" font-size="19" font-weight="bold" fill="#eee" textLength="75" lengthAdjust="spacingAndGlyphs">官方正品</text>
<text x="2119" y="1158" font-size="19" font-weight="bold" fill="#eee" textLength="74" lengthAdjust="spacingAndGlyphs">送货上门</text>
<g font-size="31" font-weight="bold" fill="#111">
<text transform="translate(2024,1204) scale(1,.75)">0糖</text>
<text transform="translate(2087,1204) scale(1,.75)">0脂</text>
<text transform="translate(2150,1204) scale(1,.75)">0卡</text>
</g>
<text transform="translate(2037,1231) scale(1,.85)" font-size="17" fill="#333" textLength="146" lengthAdjust="spacing">白桃+葡萄+乳酸菌</text>
<rect x="2028.5" y="1242.5" width="165" height="99" rx="8" fill="#fff" stroke="#d65a5e" stroke-width="1.2"/>
<path d="M2028 1266V1250Q2028 1242 2036 1242H2186Q2194 1242 2194 1250V1266Z" fill="#ee3a3c"/>
<text x="2068" y="1261" font-size="17" font-weight="bold" fill="#fde" textLength="85" lengthAdjust="spacingAndGlyphs">限量1000件</text>
<text x="2067" y="1303" font-size="13.5" fill="#333" text-anchor="middle" font-weight="bold">买2件</text>
<text x="2067" y="1317" font-size="13.5" fill="#333" text-anchor="middle">制冰具模块</text>
<rect x="2117" y="1276" width="42" height="32" rx="4" fill="#aaa8a0" transform="rotate(8 2138 1292)" filter="url(#pb)"/>
<rect x="2141" y="1298" width="40" height="34" rx="4" fill="#c4c2bc" transform="rotate(-10 2161 1315)" filter="url(#pb)"/>
<path d="M2126 1298L2138 1282L2146 1298Z" fill="#555" filter="url(#pb)"/>
<path d="M2153 1305L2170 1326" stroke="#666" stroke-width="5" filter="url(#pb)"/>
<text x="2110" y="1354" font-size="8" fill="#aaa" text-anchor="middle">*赠品1米内带包发货</text>

<!-- bottom -->
<rect x="1890" y="1392" width="334" height="50" fill="#e02a2c"/>
<path d="M1784 1372H1920C1930 1378 1935 1395 1940 1405C1948 1425 1955 1435 1968 1442H1784Z" fill="url(#gold)"/>
<text x="1806" y="1388" font-size="14" font-weight="bold" fill="#b8332f" textLength="108" lengthAdjust="spacing">秒杀预估手价/件</text>
<text x="1790" y="1436" font-size="16" font-weight="bold" fill="#b8332f">¥</text>
<text x="1806" y="1437" font-size="58" font-weight="bold" fill="#c8141c" textLength="72" lengthAdjust="spacingAndGlyphs">57</text>
<text x="1879" y="1437" font-size="34" font-weight="bold" fill="#c8141c">.9</text>
<text transform="translate(1968,1436) scale(1,.87)" font-size="46" font-weight="bold" fill="#fff">1件立减</text>
<text transform="translate(2138,1436) scale(1,.87)" font-size="46" font-weight="bold" fill="#fff">8元</text>
<rect x="2132" y="1407" width="92" height="35" fill="#2a2a2c"/>
<text x="2178" y="1436" font-size="29" fill="#fff" text-anchor="middle">广告</text>
</svg>
</div>
</body></html>
